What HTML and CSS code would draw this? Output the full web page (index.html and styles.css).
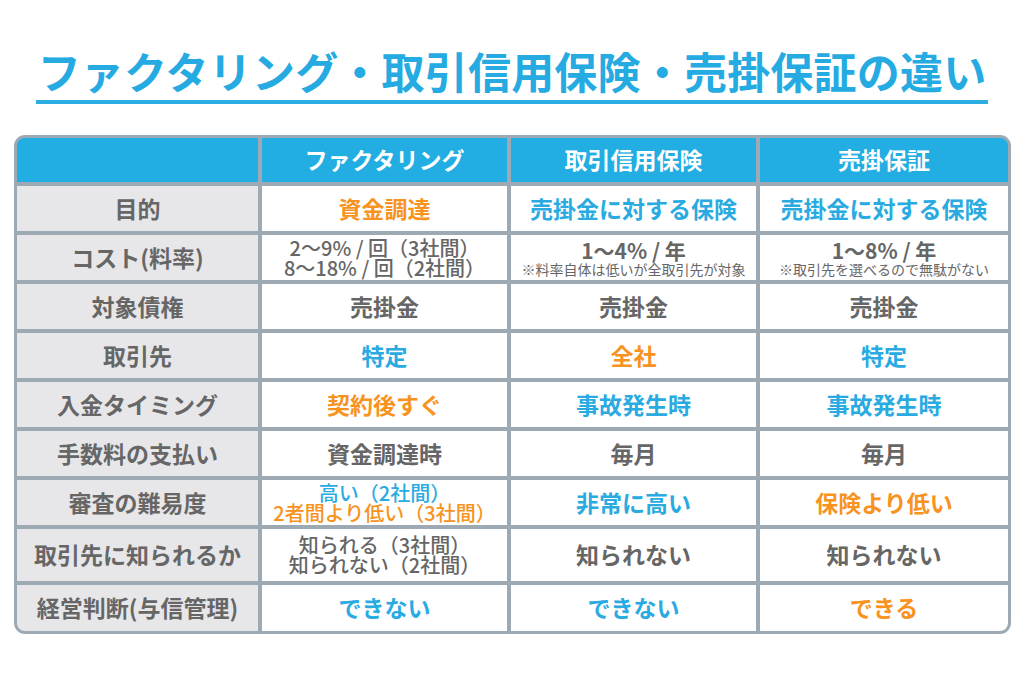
FILE: index.html
```html
<!DOCTYPE html>
<html lang="ja">
<head>
<meta charset="utf-8">
<link rel="stylesheet" href="styles.css">
</head>
<body>
<div class="page">
  <h1 class="title">ファクタリング・取引信用保険・売掛保証の違い</h1>
  <div class="table">
    <div class="cell head corner-tl"></div>
    <div class="cell head">ファクタリング</div>
    <div class="cell head">取引信用保険</div>
    <div class="cell head corner-tr">売掛保証</div>

    <div class="cell label">目的</div>
    <div class="cell orange">資金調達</div>
    <div class="cell blue">売掛金に対する保険</div>
    <div class="cell blue">売掛金に対する保険</div>

    <div class="cell label">コスト(料率)</div>
    <div class="cell small gray"><span>2〜9% / 回（3社間）</span><span>8〜18% / 回（2社間）</span></div>
    <div class="cell gray"><span class="main">1〜4% / 年</span><span class="note">※料率自体は低いが全取引先が対象</span></div>
    <div class="cell gray"><span class="main">1〜8% / 年</span><span class="note">※取引先を選べるので無駄がない</span></div>

    <div class="cell label">対象債権</div>
    <div class="cell gray">売掛金</div>
    <div class="cell gray">売掛金</div>
    <div class="cell gray">売掛金</div>

    <div class="cell label">取引先</div>
    <div class="cell blue">特定</div>
    <div class="cell orange">全社</div>
    <div class="cell blue">特定</div>

    <div class="cell label">入金タイミング</div>
    <div class="cell orange">契約後すぐ</div>
    <div class="cell blue">事故発生時</div>
    <div class="cell blue">事故発生時</div>

    <div class="cell label">手数料の支払い</div>
    <div class="cell gray">資金調達時</div>
    <div class="cell gray">毎月</div>
    <div class="cell gray">毎月</div>

    <div class="cell label">審査の難易度</div>
    <div class="cell small"><span class="blue">高い（2社間）</span><span class="orange">2者間より低い（3社間）</span></div>
    <div class="cell blue">非常に高い</div>
    <div class="cell orange">保険より低い</div>

    <div class="cell label">取引先に知られるか</div>
    <div class="cell small gray"><span>知られる（3社間）</span><span>知られない（2社間）</span></div>
    <div class="cell gray">知られない</div>
    <div class="cell gray">知られない</div>

    <div class="cell label corner-bl">経営判断(与信管理)</div>
    <div class="cell blue">できない</div>
    <div class="cell blue">できない</div>
    <div class="cell orange corner-br">できる</div>
  </div>
</div>
</body>
</html>
```

FILE: styles.css
```css
html, body {
  margin: 0;
  padding: 0;
  background: #ffffff;
}

body {
  width: 1024px;
  height: 683px;
  overflow: hidden;
  font-family: "Noto Sans CJK JP", "Noto Sans", sans-serif;
}

.page {
  display: flex;
  flex-direction: column;
  align-items: flex-start;
}

.title {
  align-self: center;
  width: 952px;
  margin: 45px 0 0 0;
  padding: 0 0 4px 0;
  font-size: 43px;
  line-height: 51px;
  font-weight: 700;
  color: #25abe2;
  text-align: center;
  letter-spacing: 0.2px;
  border-bottom: 4px solid #2aaee4;
}

.table {
  margin: 31px 0 0 14px;
  display: grid;
  grid-template-columns: 241px 245px 245px 248px;
  grid-template-rows: 44px repeat(7, 45px) 52px 46px;
  gap: 4px;
  background: #9eaab3;
  border: 3px solid #9eaab3;
  border-radius: 11px;
}

.cell {
  background: #ffffff;
  display: flex;
  flex-direction: column;
  align-items: center;
  justify-content: center;
  font-size: 23px;
  font-weight: 700;
  line-height: 1.2;
  color: #666666;
  white-space: nowrap;
}

.head {
  background: #22ade3;
  color: #ffffff;
  font-weight: 700;
  font-size: 23px;
}

.label {
  background: #e7e7e9;
  color: #666666;
}

.corner-tl { border-top-left-radius: 8px; }
.corner-tr { border-top-right-radius: 8px; }
.corner-bl { border-bottom-left-radius: 8px; }
.corner-br { border-bottom-right-radius: 8px; }

.gray { color: #666666; }
.blue { color: #29abe2; }
.orange { color: #f7931e; }

.small {
  font-size: 20px;
  font-weight: 500;
  line-height: 20px;
}

.small span {
  display: block;
  height: 20px;
}

.main {
  font-size: 21px;
  font-weight: 700;
  line-height: 22px;
}

.note {
  font-size: 14px;
  font-weight: 400;
  line-height: 16px;
}
```
